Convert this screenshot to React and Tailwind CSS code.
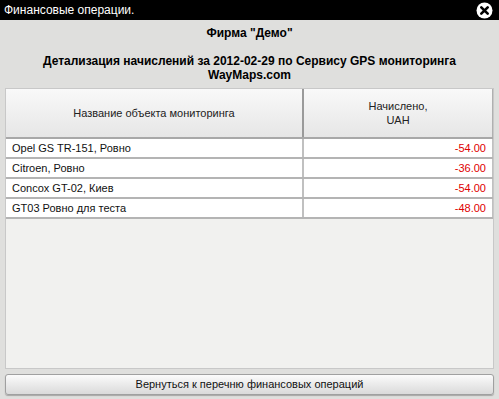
const rows = [
  { name: 'Opel GS TR-151, Ровно', sum: '-54.00' },
  { name: 'Citroen, Ровно', sum: '-36.00' },
  { name: 'Concox GT-02, Киев', sum: '-54.00' },
  { name: 'GT03 Ровно для теста', sum: '-48.00' },
]

export default function App() {
  return (
    <div className="w-[499px] h-[399px] flex flex-col bg-[#dfdfdd] font-['Liberation_Sans',Arial,sans-serif] overflow-hidden">
      {/* Title bar */}
      <div className="h-[20px] bg-black flex items-center justify-between pl-[4px] pr-[6px]">
        <span className="text-white text-[12px] leading-none">Финансовые операции.</span>
        <svg width="17" height="17" viewBox="0 0 17 17">
          <circle cx="8.5" cy="8.5" r="8" fill="#fff" />
          <path d="M5.3 5.3 L11.7 11.7 M11.7 5.3 L5.3 11.7" stroke="#000" strokeWidth="2.6" strokeLinecap="round" />
        </svg>
      </div>

      {/* Heading */}
      <div className="flex flex-col items-center pt-[6px] text-[12px] font-bold text-black leading-[14px]">
        <div>Фирма "Демо"</div>
        <div className="mt-[14px] text-center">
          Детализация начислений за 2012-02-29 по Сервису GPS мониторинга
          <br />
          WayMaps.com
        </div>
      </div>

      {/* Table */}
      <div className="mx-[5px] mt-[6px] h-[281px] bg-[#f1f1ef] border border-[#c8c8c8] flex flex-col">
        <div className="h-[50px] shrink-0 flex bg-gradient-to-b from-[#f9f9f9] to-[#e6e6e6] border-b-2 border-[#a8a8a8] text-[11px] text-[#222]">
          <div className="w-[298px] flex items-center justify-center border-r-2 border-[#9a9a9a]">
            Название объекта мониторинга
          </div>
          <div className="flex-1 flex flex-col items-center justify-center leading-[14px] border-r border-[#b0b0b0]">
            <span>Начислено,</span>
            <span>UAH</span>
          </div>
        </div>
        {rows.map((r) => (
          <div key={r.name} className="h-[20px] shrink-0 flex bg-white border-b-2 border-[#b4b4b4] text-[11px]">
            <div className="w-[298px] flex items-center pl-[6px] border-r-2 border-[#c0c0c0] text-[#111]">
              {r.name}
            </div>
            <div className="flex-1 flex items-center justify-end pr-[6px] text-[#e00000] border-r border-[#c0c0c0]">
              {r.sum}
            </div>
          </div>
        ))}
      </div>

      {/* Button */}
      <div className="mx-[5px] mt-[5px] h-[21px] rounded-[3px] border border-[#a0a0a0] bg-gradient-to-b from-[#fbfbfb] to-[#dadada] flex items-center justify-center text-[11px] text-[#111] shadow-[0_1px_1px_rgba(0,0,0,0.25)]">
        Вернуться к перечню финансовых операций
      </div>
    </div>
  )
}
